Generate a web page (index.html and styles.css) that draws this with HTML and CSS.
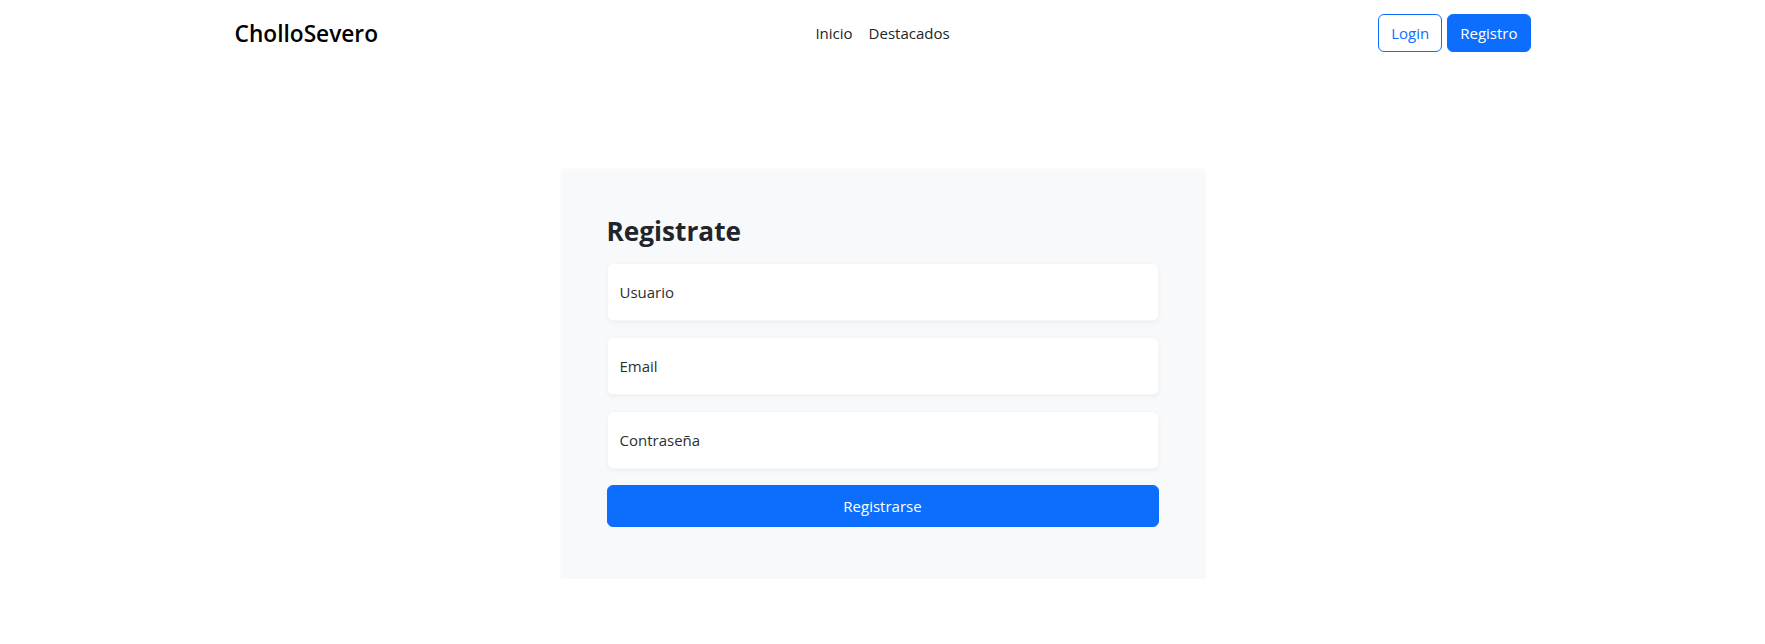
FILE: index.html
```html
<!DOCTYPE html>
<html lang="es">
<head>
<meta charset="utf-8">
<title>CholloSevero - Registro</title>
<link rel="stylesheet" href="styles.css">
</head>
<body>
<nav class="navbar">
  <div class="nav-container">
    <a class="brand" href="#">CholloSevero</a>
    <ul class="nav-links">
      <li><a href="#">Inicio</a></li>
      <li><a href="#">Destacados</a></li>
    </ul>
    <div class="nav-actions">
      <a class="btn btn-outline" href="#">Login</a>
      <a class="btn btn-primary" href="#">Registro</a>
    </div>
  </div>
</nav>
<main class="main">
  <section class="card">
    <h3 class="card-title">Registrate</h3>
    <form class="form">
      <input class="field" type="text" placeholder="Usuario">
      <input class="field" type="email" placeholder="Email">
      <input class="field" type="password" placeholder="Contraseña">
      <button class="submit" type="button">Registrarse</button>
    </form>
  </section>
</main>
</body>
</html>
```
FILE: styles.css
```css
* { box-sizing: border-box; }
html, body { margin: 0; padding: 0; background: #fff; }
body {
  font-family: "Open Sans", "Noto Sans", "Liberation Sans", sans-serif;
  font-size: 16px;
  line-height: 1.5;
  color: #212529;
}
a { text-decoration: none; }

.navbar { padding: 14px 0; }
.nav-container {
  width: 1320px;
  margin: 0 auto;
  padding: 0 12px;
  display: grid;
  grid-template-columns: 1fr auto 1fr;
  align-items: center;
}
.brand {
  justify-self: start;
  font-size: 22.7px;
  font-weight: 600;
  color: #000;
  line-height: 1.2;
}
.nav-links {
  list-style: none;
  margin: 0;
  padding: 0;
  display: flex;
}
.nav-links a {
  display: block;
  padding: 8px 8px;
  color: #212529;
  font-size: 15px;
}
.nav-actions {
  justify-self: end;
  display: flex;
  gap: 5px;
}
.btn {
  display: inline-block;
  height: 38px;
  line-height: 36px;
  padding: 0 12px;
  border: 1px solid #0d6efd;
  border-radius: 6px;
  font-size: 15px;
}
.btn-outline { color: #0d6efd; background: #fff; }
.btn-primary { color: #fff; background: #0d6efd; }

.main { padding-top: 102px; }
.card {
  width: 644px;
  margin: 0 auto;
  background: #f8f9fa;
  padding: 46px 46px 52px;
  box-shadow: 0 0 3px rgba(0,0,0,0.03);
}
.card-title {
  margin: 0 0 16px;
  font-size: 26.2px;
  font-weight: 700;
  line-height: 1.25;
  color: #212529;
}
.form { display: flex; flex-direction: column; gap: 16px; }
.field {
  display: block;
  width: 100%;
  height: 58px;
  padding: 0 12px;
  border: 1px solid #f5f6f7;
  border-radius: 6px;
  background: #fff;
  box-shadow: 0 2px 4px rgba(0,0,0,0.045);
  font-family: inherit;
  font-size: 15px;
  color: #212529;
}
.field::placeholder { color: #2b2f33; opacity: 1; }
.submit {
  height: 42px;
  width: 100%;
  border: 1px solid #0d6efd;
  border-radius: 6px;
  background: #0d6efd;
  color: #fff;
  font-family: inherit;
  font-size: 15px;
}
```
